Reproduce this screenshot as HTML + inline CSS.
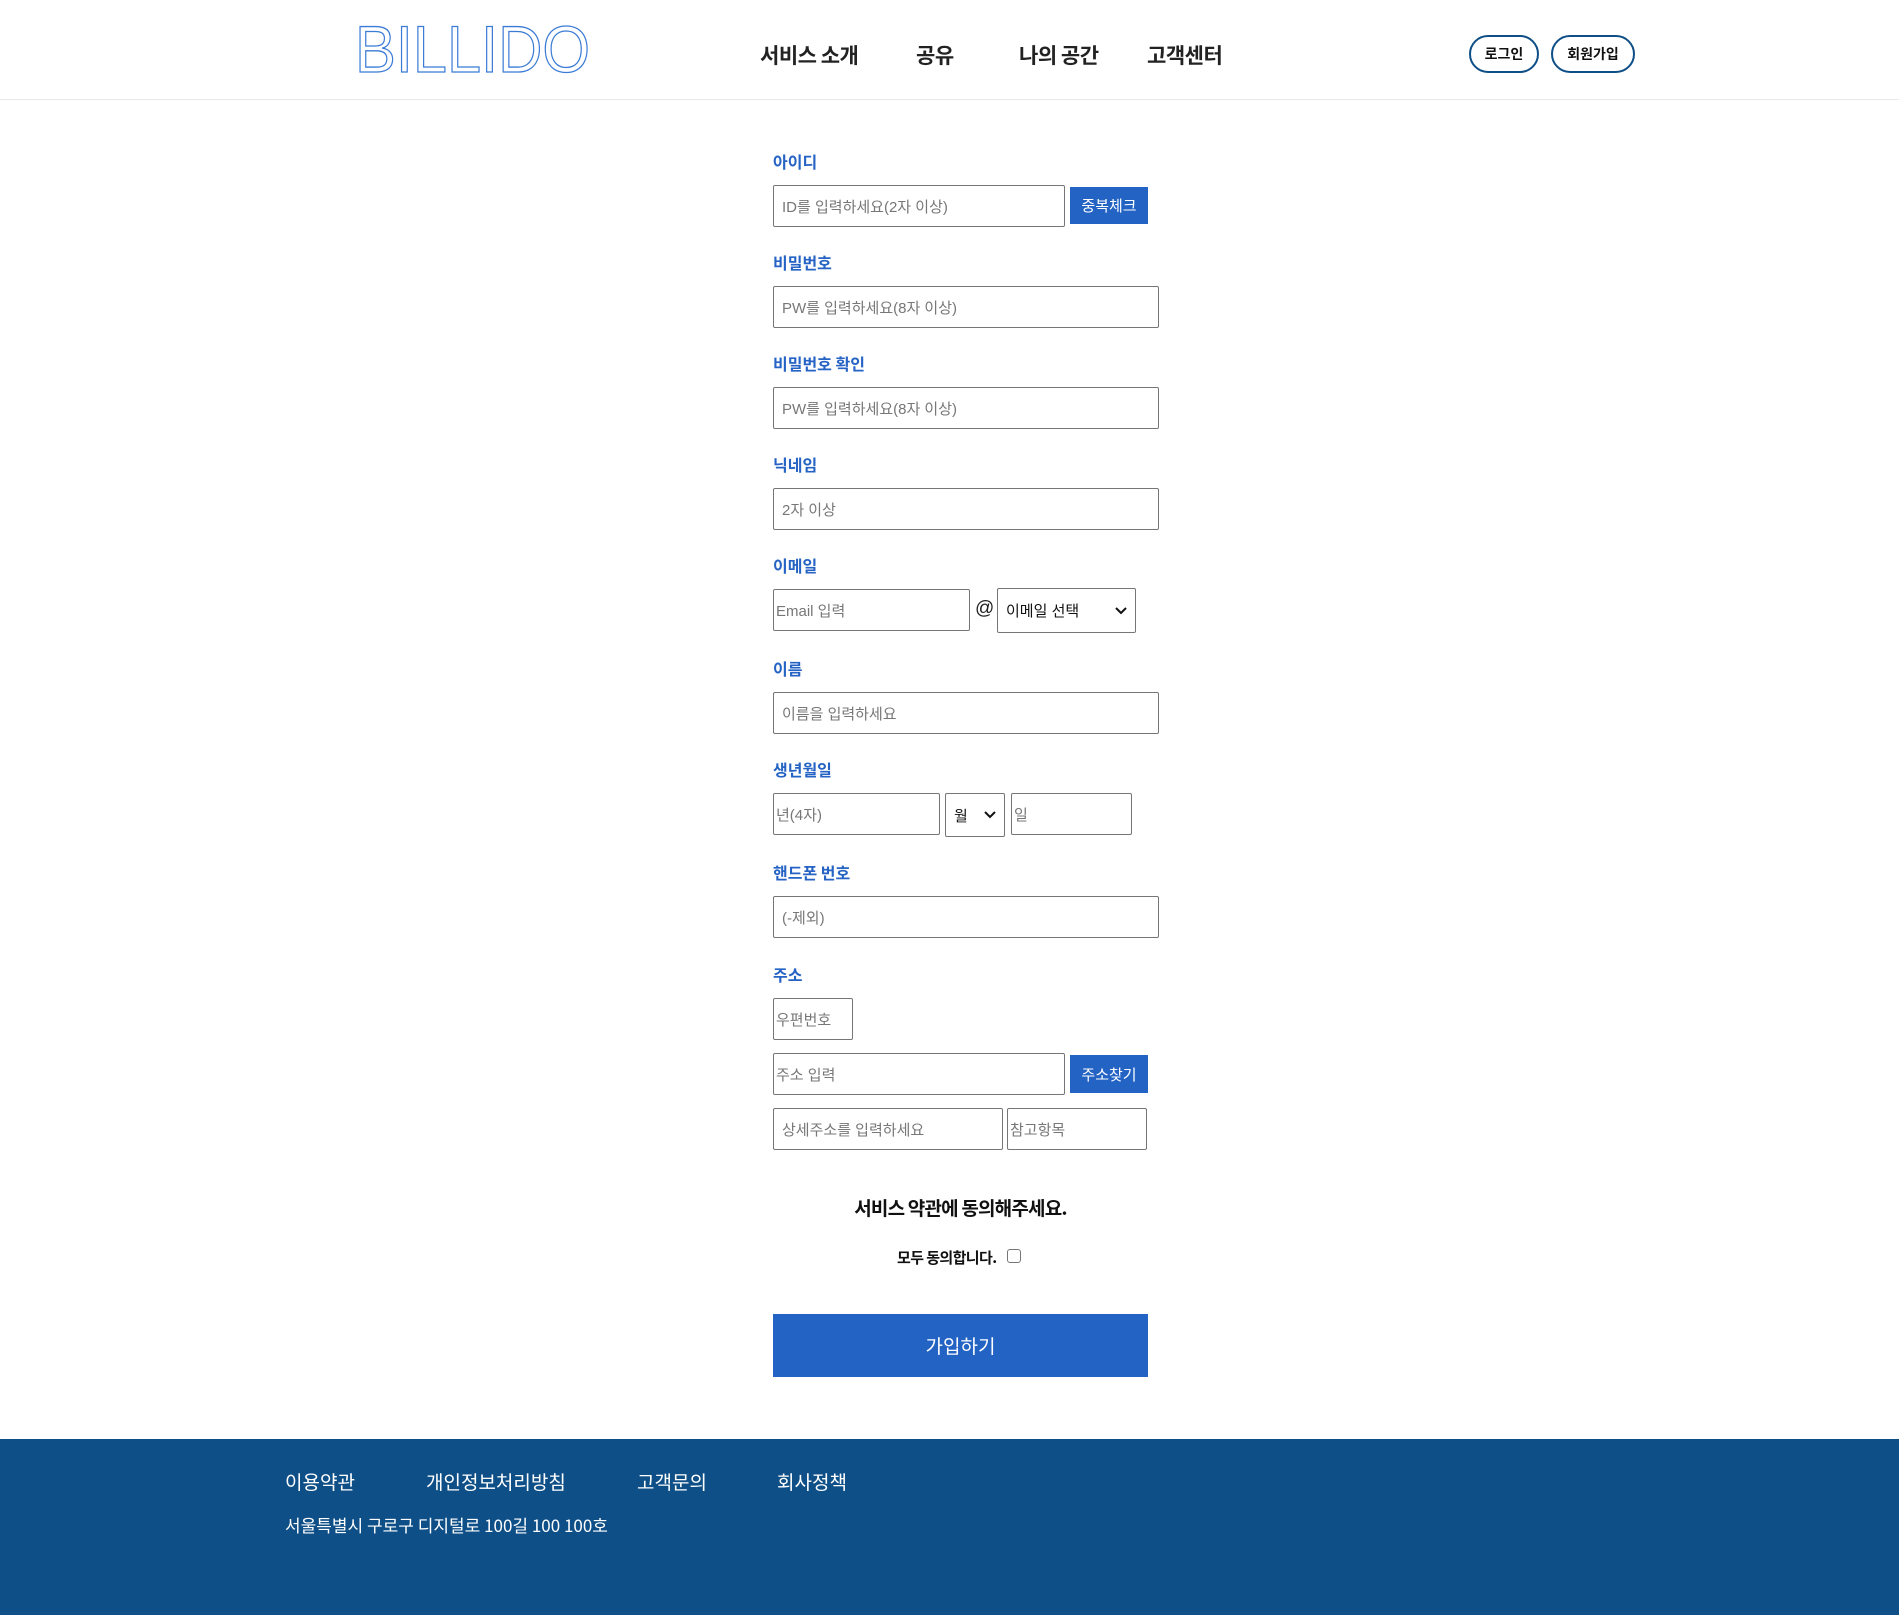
<!DOCTYPE html>
<html><head><meta charset="utf-8"><style>
*{box-sizing:border-box;margin:0;padding:0}
body{width:1899px;height:1615px;position:relative;background:#fff;font-family:"Liberation Sans","Noto Sans CJK KR",sans-serif;overflow:hidden}
.a{position:absolute}
.hdr{left:0;top:0;width:1899px;height:100px;border-bottom:1px solid #e8e8e8}
.nav{font-size:21px;font-weight:700;color:#222;top:40px;font-family:"Noto Sans CJK KR",sans-serif;letter-spacing:-0.5px}
.pill{top:35px;height:38px;border:2px solid #0f4f87;border-radius:19px;font-size:14px;font-weight:700;color:#111;display:flex;align-items:center;justify-content:center;font-family:"Noto Sans CJK KR",sans-serif}
.lab{left:773px;font-size:16px;font-weight:700;color:#2563c4;font-family:"Noto Sans CJK KR",sans-serif;line-height:20px}
.in{border:1px solid #767676;border-radius:2px;height:42px;font-size:15px;color:#777;display:flex;align-items:center;padding-left:8px;font-family:"Liberation Sans","Noto Sans CJK KR",sans-serif;white-space:nowrap}
.np{padding-left:2px}
.btn{background:#2363c4;color:#fff;font-size:15px;display:flex;align-items:center;justify-content:center;font-family:"Noto Sans CJK KR",sans-serif}
.sel{color:#111;justify-content:space-between;padding-right:8px}
.ft{color:#fff;font-size:19px;font-family:"Noto Sans CJK KR",sans-serif;top:1468px}
</style></head><body>
<div class="a hdr"></div>
<svg class="a" style="left:354px;top:22px" width="240" height="54"><text x="1" y="50" font-family="Liberation Sans Narrow, Liberation Sans" font-size="66" textLength="235" lengthAdjust="spacingAndGlyphs" fill="#fff" stroke="#3b7bd6" stroke-width="1.3">BILLIDO</text></svg>
<div class="a nav" style="left:760px">서비스 소개</div>
<div class="a nav" style="left:916px">공유</div>
<div class="a nav" style="left:1019px">나의 공간</div>
<div class="a nav" style="left:1147px">고객센터</div>
<div class="a pill" style="left:1469px;width:70px">로그인</div>
<div class="a pill" style="left:1551px;width:84px">회원가입</div>

<div class="a lab" style="top:151px">아이디</div>
<div class="a in" style="left:773px;top:185px;width:292px">ID를 입력하세요(2자 이상)</div>
<div class="a btn" style="left:1070px;top:187px;width:78px;height:37px">중복체크</div>

<div class="a lab" style="top:252px">비밀번호</div>
<div class="a in" style="left:773px;top:286px;width:386px">PW를 입력하세요(8자 이상)</div>

<div class="a lab" style="top:353px">비밀번호 확인</div>
<div class="a in" style="left:773px;top:387px;width:386px">PW를 입력하세요(8자 이상)</div>

<div class="a lab" style="top:454px">닉네임</div>
<div class="a in" style="left:773px;top:488px;width:386px">2자 이상</div>

<div class="a lab" style="top:555px">이메일</div>
<div class="a in np" style="left:773px;top:589px;width:197px">Email 입력</div>
<div class="a" style="left:975px;top:598px;font-size:19px;color:#222">@</div>
<div class="a in sel" style="left:997px;top:588px;width:139px;height:45px">이메일 선택<svg width="12" height="8"><path d="M1 1l5 5 5-5" fill="none" stroke="#111" stroke-width="2"/></svg></div>

<div class="a lab" style="top:658px">이름</div>
<div class="a in" style="left:773px;top:692px;width:386px">이름을 입력하세요</div>

<div class="a lab" style="top:759px">생년월일</div>
<div class="a in np" style="left:773px;top:793px;width:167px">년(4자)</div>
<div class="a in sel" style="left:945px;top:793px;width:60px;height:44px">월<svg width="12" height="8"><path d="M1 1l5 5 5-5" fill="none" stroke="#111" stroke-width="2"/></svg></div>
<div class="a in np" style="left:1011px;top:793px;width:121px">일</div>

<div class="a lab" style="top:862px">핸드폰 번호</div>
<div class="a in" style="left:773px;top:896px;width:386px">(-제외)</div>

<div class="a lab" style="top:964px">주소</div>
<div class="a in np" style="left:773px;top:998px;width:80px">우편번호</div>
<div class="a in np" style="left:773px;top:1053px;width:292px">주소 입력</div>
<div class="a btn" style="left:1070px;top:1055px;width:78px;height:38px">주소찾기</div>
<div class="a in" style="left:773px;top:1108px;width:230px">상세주소를 입력하세요</div>
<div class="a in np" style="left:1007px;top:1108px;width:140px">참고항목</div>

<div class="a" style="left:773px;width:375px;top:1194px;text-align:center;font-size:19px;font-weight:700;color:#111;font-family:'Noto Sans CJK KR',sans-serif;letter-spacing:-0.8px">서비스 약관에 동의해주세요.</div>
<div class="a" style="left:897px;top:1247px;font-size:15px;font-weight:700;color:#111;font-family:'Noto Sans CJK KR',sans-serif;letter-spacing:-0.6px">모두 동의합니다.</div>
<div class="a" style="left:1007px;top:1249px;width:14px;height:14px;border:1px solid #767676;border-radius:3px"></div>
<div class="a btn" style="left:773px;top:1314px;width:375px;height:63px;font-size:19px">가입하기</div>

<div class="a" style="left:0;top:1439px;width:1899px;height:176px;background:#0f4f87"></div>
<div class="a ft" style="left:285px">이용약관</div>
<div class="a ft" style="left:426px">개인정보처리방침</div>
<div class="a ft" style="left:637px">고객문의</div>
<div class="a ft" style="left:777px">회사정책</div>
<div class="a" style="left:285px;top:1512px;color:#fff;font-size:17px;font-family:'Noto Sans CJK KR',sans-serif">서울특별시 구로구 디지털로 100길 100 100호</div>
</body></html>
